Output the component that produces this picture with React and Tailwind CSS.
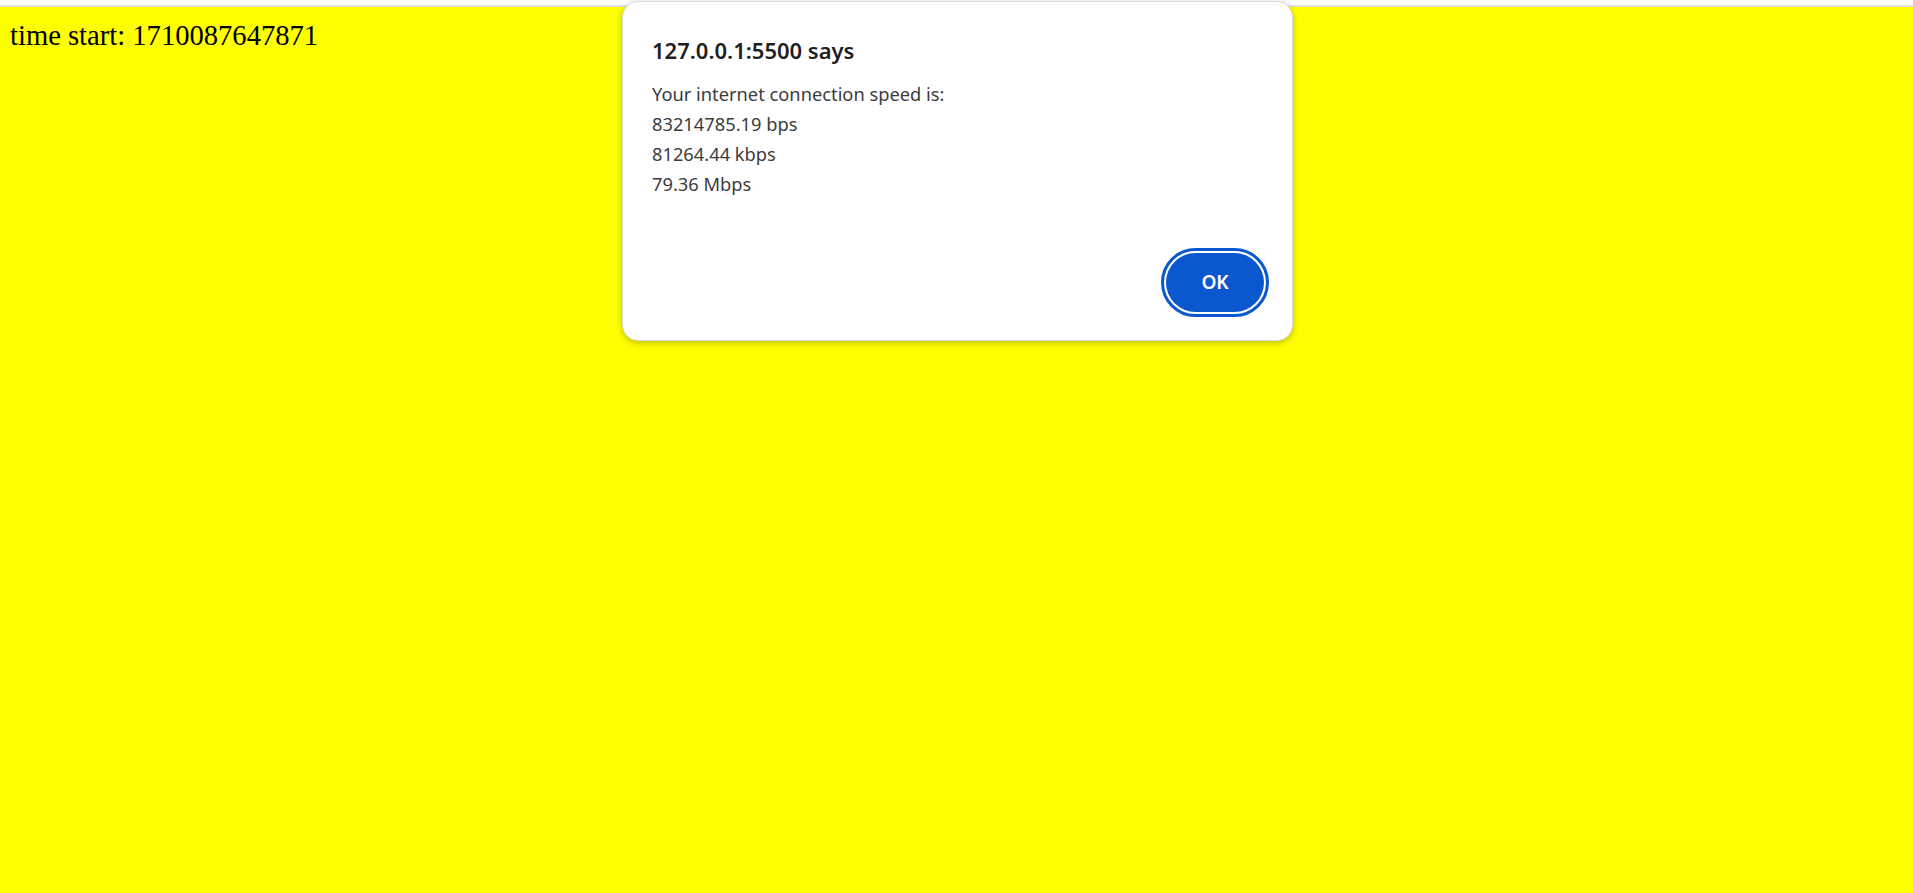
import { useState } from 'react'

function AlertDialog({ onClose }) {
    return (
        <div className="absolute left-[622px] top-[1px] w-[671px] h-[340px] bg-white rounded-[16px] border border-[#dadada] shadow-[0_2px_6px_rgba(0,0,0,0.25)] pt-[34px] pl-[29px] pr-[24px] flex flex-col"
            style={{ fontFamily: '"Noto Sans", "Open Sans", sans-serif' }}>
            <h2 className="text-[22px] leading-[28px] font-semibold text-[#1f1f1f]">127.0.0.1:5500 says</h2>
            <div className="mt-[15px] text-[18.3px] leading-[30px] text-[#3c3c3c]">
                <div>Your internet connection speed is:</div>
                <div>83214785.19 bps</div>
                <div>81264.44 kbps</div>
                <div>79.36 Mbps</div>
            </div>
            <div className="flex justify-end mt-auto mb-[28px] pr-[4px]">
                <button onClick={onClose}
                    className="w-[98px] h-[59px] rounded-full bg-[#0b57d0] text-white text-[19px] font-semibold outline-[3px] outline-solid outline-[#0b57d0] outline-offset-[2px]">
                    OK
                </button>
            </div>
        </div>
    )
}

export default function App() {
    const [open, setOpen] = useState(true)

    return (
        <div className="relative min-h-screen flex flex-col">
            <div className="h-[5px] bg-white" />
            <div className="h-[2px] bg-[#e2e2e2]" />
            <div className="flex-1 bg-[#ffff00] pt-[8px] pl-[10px]">
                <p className="text-[28.6px] text-black" style={{ fontFamily: '"Liberation Serif", serif' }}>
                    time start: 1710087647871
                </p>
            </div>
            {open && <AlertDialog onClose={() => setOpen(false)} />}
        </div>
    )
}
